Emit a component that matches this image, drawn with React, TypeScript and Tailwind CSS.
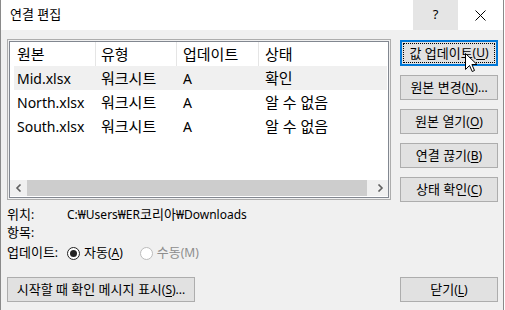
import React from "react";

const font = { fontFamily: '"Noto Sans", "Noto Sans CJK KR", sans-serif' };

function U({ c }: { c: string }) {
  return <span className="underline underline-offset-2">{c}</span>;
}

function K({ children }: { children: React.ReactNode }) {
  return <span className="text-[13px]">{children}</span>;
}

function L({ children }: { children: React.ReactNode }) {
  return <span className="text-[15px]">{children}</span>;
}

function Btn({ children, focus, className = "" }: { children: React.ReactNode; focus?: boolean; className?: string }) {
  if (focus) {
    return (
      <div className={`h-[26px] border-2 border-[#0078d7] bg-[#e1e1e1] p-px ${className}`}>
        <div className="flex h-full items-center justify-center border border-dotted border-black text-[12px] leading-none text-black">
          {children}
        </div>
      </div>
    );
  }
  return (
    <div className={`flex h-[25px] items-center justify-center border border-[#adadad] bg-[#e1e1e1] text-[12px] leading-none text-black ${className}`}>
      {children}
    </div>
  );
}

const rows = [
  { src: "Mid.xlsx", type: "워크시트", up: "A", st: "확인", sel: true },
  { src: "North.xlsx", type: "워크시트", up: "A", st: "알 수 없음" },
  { src: "South.xlsx", type: "워크시트", up: "A", st: "알 수 없음" },
];

export default function App() {
  return (
    <div className="relative h-[310px] w-[505px] overflow-hidden bg-white" style={font}>
      <div className="flex h-full w-[504px] flex-col border-l border-r border-[#8a8a8a]">
        {/* title bar */}
        <div className="flex h-[30px] items-center bg-white">
          <div className="flex-1 pl-[9px] text-[13px] text-black">연결 편집</div>
          <div className="flex h-full w-[45px] items-center justify-center bg-[#e5e5e5] text-[13px] text-black">?</div>
          <div className="flex h-full w-[45px] items-center justify-center">
            <svg width="11" height="11" viewBox="0 0 11 11">
              <path d="M0.5 0.5 L10.5 10.5 M10.5 0.5 L0.5 10.5" stroke="#000" strokeWidth="1" />
            </svg>
          </div>
        </div>

        {/* body */}
        <div className="flex flex-1 flex-col bg-[#f0f0f0] pl-[6px] pr-[5px] pt-[9px]">
          <div className="flex gap-[9px]">
            {/* list */}
            <div className="h-[161px] w-[384px] border border-[#adadad] bg-[#f0f0f0] p-px">
              <div className="flex h-full flex-col border border-[#828790] bg-white">
                <div className="flex h-[24px] text-[14px] text-black">
                  <div className="flex w-[85px] items-center pl-[7px]"><L>원본</L></div>
                  <div className="flex w-[81px] items-center border-l border-[#e5e5e5] pl-[5px]"><L>유형</L></div>
                  <div className="flex w-[82px] items-center border-l border-[#e5e5e5] pl-[6px]"><L>업데이트</L></div>
                  <div className="flex flex-1 items-center border-l border-[#e5e5e5] pl-[6px]"><L>상태</L></div>
                </div>
                <div className="flex-1">
                  {rows.map((r) => (
                    <div key={r.src} className={`ml-[4px] mr-[1px] flex h-[24px] items-center text-[14px] text-black ${r.sel ? "bg-[#f0f0f0]" : ""}`}>
                      <div className="w-[87px] pl-[3px]">{r.src}</div>
                      <div className="w-[82px]"><L>{r.type}</L></div>
                      <div className="w-[82px]">{r.up}</div>
                      <div className="flex-1"><L>{r.st}</L></div>
                    </div>
                  ))}
                </div>
                {/* scrollbar */}
                <div className="mb-px flex h-[16px] bg-[#f0f0f0]">
                  <div className="flex w-[17px] items-center justify-center">
                    <svg width="8" height="8" viewBox="0 0 8 8">
                      <path d="M5.5 0.5 L2 4 L5.5 7.5" fill="none" stroke="#606060" strokeWidth="1.6" />
                    </svg>
                  </div>
                  <div className="flex-1 bg-[#cdcdcd]" />
                  <div className="w-[4px]" />
                  <div className="flex w-[17px] items-center justify-center">
                    <svg width="8" height="8" viewBox="0 0 8 8">
                      <path d="M2.5 0.5 L6 4 L2.5 7.5" fill="none" stroke="#606060" strokeWidth="1.6" />
                    </svg>
                  </div>
                </div>
              </div>
            </div>

            {/* buttons */}
            <div className="flex w-[98px] flex-col gap-[9px] pt-px">
              <Btn focus>
                <K>값 업데이트</K>(<U c="U" />)
              </Btn>
              <Btn>
                <K>원본 변경</K>(<U c="N" />)...
              </Btn>
              <Btn>
                <K>원본 열기</K>(<U c="O" />)
              </Btn>
              <Btn>
                <K>연결 끊기</K>(<U c="B" />)
              </Btn>
              <Btn>
                <K>상태 확인</K>(<U c="C" />)
              </Btn>
            </div>
          </div>

          {/* info */}
          <div className="mt-[4px] flex h-[18px] items-center text-[12px] text-black">
            <div className="w-[60px]"><K>위치</K>:</div>
            <div>
              C:₩Users₩ER<K>코리아</K>₩Downloads
            </div>
          </div>
          <div className="flex h-[18px] items-center text-[12px] text-black">
            <div className="w-[60px]"><K>항목</K>:</div>
          </div>
          <div className="flex h-[22px] items-center text-[12px] text-black">
            <div className="w-[60px]"><K>업데이트</K>:</div>
            <div className="flex items-center">
              <div className="flex h-[13px] w-[13px] items-center justify-center rounded-full border border-[#222] bg-white">
                <div className="h-[7px] w-[7px] rounded-full bg-[#222]" />
              </div>
              <span className="ml-[4px]">
                <K>자동</K>(<U c="A" />)
              </span>
            </div>
            <div className="ml-[17px] flex items-center text-[#8d8d8d]">
              <div className="h-[13px] w-[13px] rounded-full border border-[#bcbcbc] bg-white" />
              <span className="ml-[4px]">
                <K>수동</K>(M)
              </span>
            </div>
          </div>

          <div className="mt-[13px] flex items-center justify-between">
            <Btn className="w-[188px]">
              <K>시작할 때 확인 메시지 표시</K>(<U c="S" />)...
            </Btn>
            <Btn className="w-[98px]">
              <K>닫기</K>(<U c="L" />)
            </Btn>
          </div>
        </div>
      </div>

      {/* mouse cursor */}
      <svg className="absolute left-[465px] top-[53px]" width="13" height="20" viewBox="0 0 13 20">
        <path
          d="M0.5 0.5 L0.5 16.5 L4.5 12.5 L7.2 18.5 L9.5 17.5 L6.9 11.5 L12 11.5 Z"
          fill="#fff"
          stroke="#000"
          strokeWidth="1"
          strokeLinejoin="miter"
        />
      </svg>
    </div>
  );
}
